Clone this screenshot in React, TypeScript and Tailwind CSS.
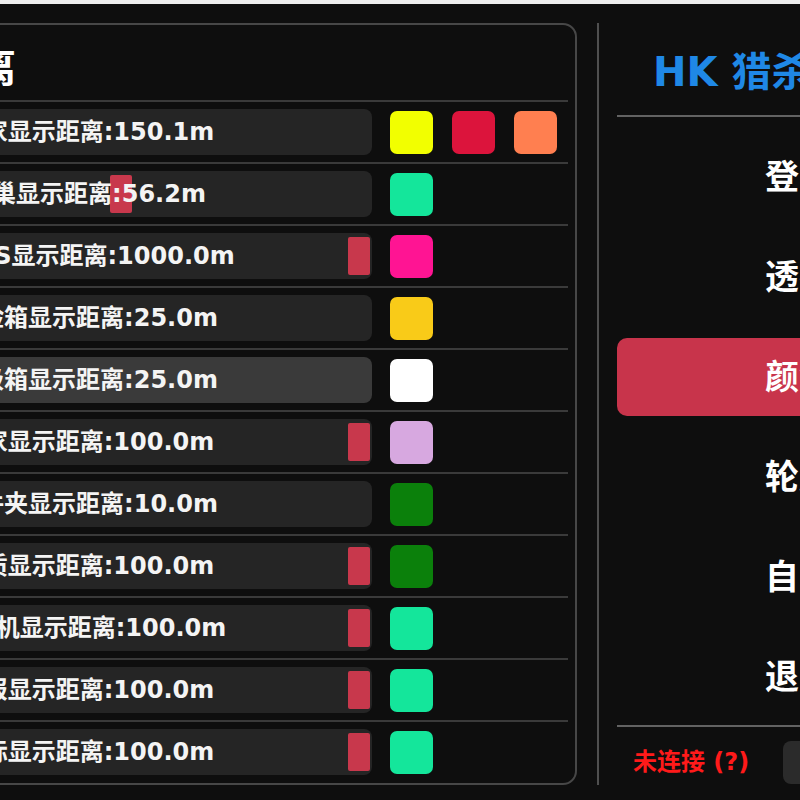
import React from "react";

type Row = {
  label: string;
  value: number;
  max: number;
  colors: string[];
  hover?: boolean;
};

const rows: Row[] = [
  { label: "玩家显示距离", value: 150.1, max: 1000, colors: ["#f2ff00", "#dc143c", "#ff7f50"] },
  { label: "蜂巢显示距离", value: 56.2, max: 100, colors: ["#14e69b"] },
  { label: "BOSS显示距离", value: 1000.0, max: 1000, colors: ["#ff1493"] },
  { label: "保险箱显示距离", value: 25.0, max: 100, colors: ["#f9cb18"] },
  { label: "高级箱显示距离", value: 25.0, max: 100, colors: ["#ffffff"], hover: true },
  { label: "商家显示距离", value: 100.0, max: 100, colors: ["#d7a8e0"] },
  { label: "文件夹显示距离", value: 10.0, max: 100, colors: ["#0b800b"] },
  { label: "人质显示距离", value: 100.0, max: 100, colors: ["#0b800b"] },
  { label: "无人机显示距离", value: 100.0, max: 100, colors: ["#14e69b"] },
  { label: "情报显示距离", value: 100.0, max: 100, colors: ["#14e69b"] },
  { label: "目标显示距离", value: 100.0, max: 100, colors: ["#14e69b"] },
];

const menu = ["登录账号", "透视设置", "颜色设置", "轮廓设置", "自瞄设置", "退出程序"];

function SliderRow({ row }: { row: Row }) {
  // grab travels 544px inside a 570px frame
  const grabLeft = 2 + (row.value / row.max) * 544;
  return (
    <div className="flex items-center h-[62px] border-t-2 border-[#3a3a3a] shrink-0">
      <div
        className={`relative w-[570px] h-[46px] rounded-[8px] flex items-center justify-center shrink-0 ${
          row.hover ? "bg-[#3a3a3a]" : "bg-[#252525]"
        }`}
      >
        <div
          className="absolute top-[4px] bottom-[4px] w-[22px] rounded-[2px] bg-[#c8384c]"
          style={{ left: grabLeft }}
        />
        <span className="relative z-10 text-[24px] font-bold text-[#f4f4f4] whitespace-nowrap leading-none">
          {row.label}:{row.value.toFixed(1)}m
        </span>
      </div>
      <div className="flex gap-[19px] ml-[18px]">
        {row.colors.map((c, i) => (
          <div key={i} className="w-[43px] h-[43px] rounded-[7px]" style={{ backgroundColor: c }} />
        ))}
      </div>
    </div>
  );
}

export default function App() {
  return (
    <div className="w-[800px] h-[800px] overflow-hidden bg-[#0e0e0e] flex flex-col font-['DejaVu_Sans','Noto_Sans_CJK_SC',sans-serif]">
      <div className="h-[4px] bg-[#ededed] shrink-0" />

      <div className="flex mt-[19px] h-[762px] shrink-0">
        {/* Left panel: distance sliders + colours */}
        <div className="-ml-[220px] w-[797px] shrink-0 border-2 border-[#474747] rounded-[14px] flex flex-col pl-[20px] pr-[7px]">
          <div className="h-[75px] shrink-0 flex items-center pt-[10px] pl-[14px]">
            <span className="text-[40px] font-bold text-white leading-none whitespace-nowrap">颜色与距离</span>
          </div>
          {rows.map((r, i) => (
            <SliderRow key={i} row={r} />
          ))}
        </div>

        {/* Divider */}
        <div className="w-[2px] bg-[#4f4f4f] ml-[20px] shrink-0" />

        {/* Right column: menu */}
        <div className="pl-[18px] w-[470px] shrink-0 flex flex-col">
          <div className="h-[92px] shrink-0 flex items-center pt-[5px] pl-[36px]">
            <span className="text-[40px] font-bold text-[#1f88e6] leading-none whitespace-nowrap">HK 猎杀者辅助</span>
          </div>
          <div className="h-[2px] bg-[#626262] shrink-0" />

          <div className="flex flex-col gap-[22px] mt-[21px] w-[432px]">
            {menu.map((m) => (
              <div
                key={m}
                className={`h-[78px] rounded-[10px] flex items-center justify-center text-[34px] font-bold text-white leading-none ${
                  m === "颜色设置" ? "bg-[#c8344b]" : ""
                }`}
              >
                {m}
              </div>
            ))}
          </div>

          <div className="h-[2px] bg-[#626262] mt-[9px] shrink-0" />

          <div className="h-[58px] flex items-center pt-[12px] pl-[16px] gap-[34px]">
            <span className="text-[24px] font-bold text-[#ff1a1a] leading-none whitespace-nowrap">未连接 (?)</span>
            <div className="w-[120px] h-[43px] rounded-[8px] bg-[#2b2b2b] shrink-0" />
          </div>
        </div>
      </div>
    </div>
  );
}
